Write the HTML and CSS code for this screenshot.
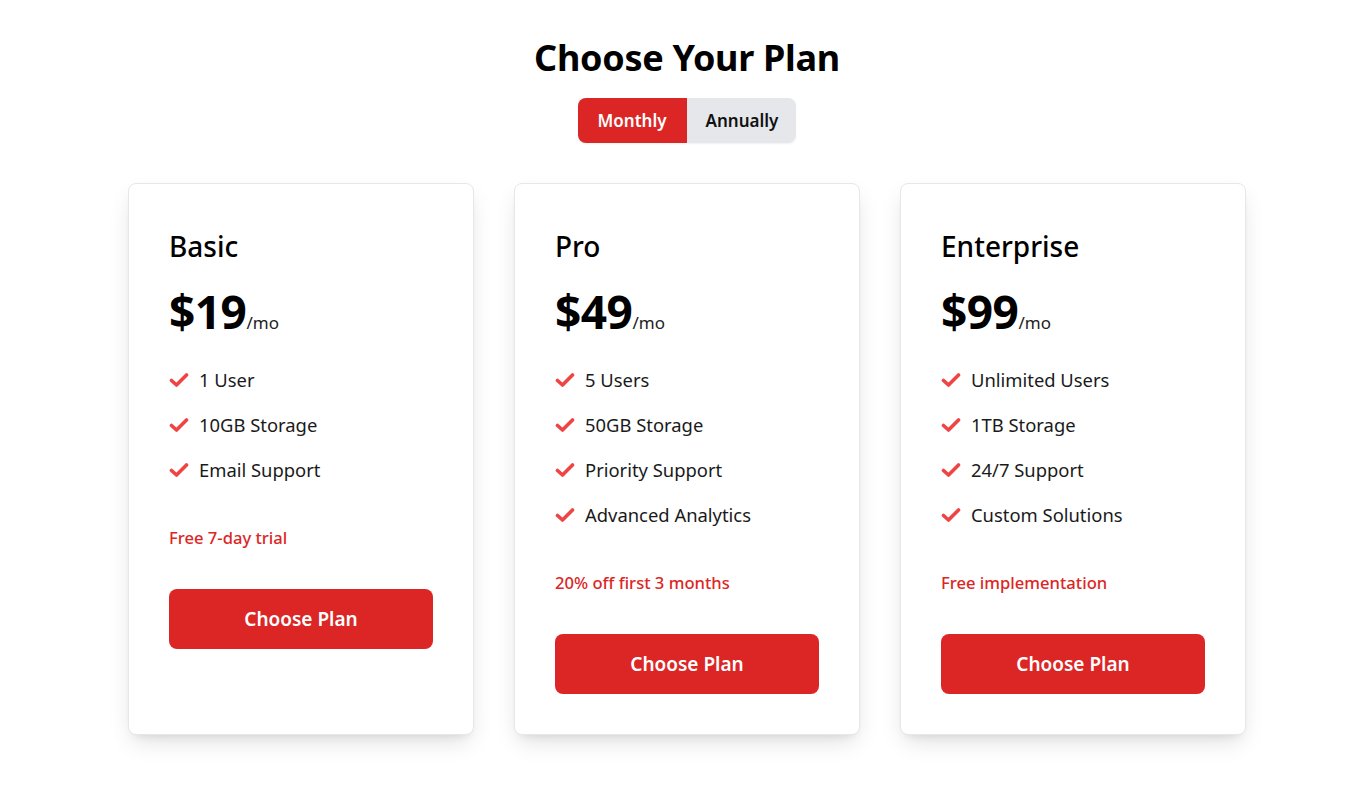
FILE: index.html
```html
<!DOCTYPE html>
<html lang="en">
<head>
<meta charset="utf-8">
<title>Choose Your Plan</title>
<link rel="stylesheet" href="styles.css">
</head>
<body>
<main class="page">
  <h1 class="title">Choose Your Plan</h1>
  <div class="toggle">
    <button class="toggle-btn active">Monthly</button>
    <button class="toggle-btn">Annually</button>
  </div>
  <section class="plans">
    <article class="card">
      <h2 class="plan-name">Basic</h2>
      <p class="price"><span class="amount">$19</span><span class="per">/mo</span></p>
      <ul class="features">
        <li><svg class="check" viewBox="0 0 20 16"><polyline points="2.5,8.5 7.5,13 17.5,3"/></svg>1 User</li>
        <li><svg class="check" viewBox="0 0 20 16"><polyline points="2.5,8.5 7.5,13 17.5,3"/></svg>10GB Storage</li>
        <li><svg class="check" viewBox="0 0 20 16"><polyline points="2.5,8.5 7.5,13 17.5,3"/></svg>Email Support</li>
      </ul>
      <p class="note">Free 7-day trial</p>
      <button class="choose">Choose Plan</button>
    </article>
    <article class="card">
      <h2 class="plan-name">Pro</h2>
      <p class="price"><span class="amount">$49</span><span class="per">/mo</span></p>
      <ul class="features">
        <li><svg class="check" viewBox="0 0 20 16"><polyline points="2.5,8.5 7.5,13 17.5,3"/></svg>5 Users</li>
        <li><svg class="check" viewBox="0 0 20 16"><polyline points="2.5,8.5 7.5,13 17.5,3"/></svg>50GB Storage</li>
        <li><svg class="check" viewBox="0 0 20 16"><polyline points="2.5,8.5 7.5,13 17.5,3"/></svg>Priority Support</li>
        <li><svg class="check" viewBox="0 0 20 16"><polyline points="2.5,8.5 7.5,13 17.5,3"/></svg>Advanced Analytics</li>
      </ul>
      <p class="note">20% off first 3 months</p>
      <button class="choose">Choose Plan</button>
    </article>
    <article class="card">
      <h2 class="plan-name">Enterprise</h2>
      <p class="price"><span class="amount">$99</span><span class="per">/mo</span></p>
      <ul class="features">
        <li><svg class="check" viewBox="0 0 20 16"><polyline points="2.5,8.5 7.5,13 17.5,3"/></svg>Unlimited Users</li>
        <li><svg class="check" viewBox="0 0 20 16"><polyline points="2.5,8.5 7.5,13 17.5,3"/></svg>1TB Storage</li>
        <li><svg class="check" viewBox="0 0 20 16"><polyline points="2.5,8.5 7.5,13 17.5,3"/></svg>24/7 Support</li>
        <li><svg class="check" viewBox="0 0 20 16"><polyline points="2.5,8.5 7.5,13 17.5,3"/></svg>Custom Solutions</li>
      </ul>
      <p class="note">Free implementation</p>
      <button class="choose">Choose Plan</button>
    </article>
  </section>
</main>
</body>
</html>
```
FILE: styles.css
```css
* { box-sizing: border-box; }
html, body { margin: 0; padding: 0; background: #ffffff; }
body {
  font-family: "Noto Sans", "Open Sans", Arial, sans-serif;
  color: #111111;
}
.page {
  padding: 36px 0 60px 12px;
  display: flex;
  flex-direction: column;
  align-items: center;
}
.title {
  margin: 0;
  font-size: 36px;
  line-height: 44px;
  font-weight: 700;
  color: #000;
  letter-spacing: -0.3px;
}
.toggle {
  margin-top: 18px;
  display: flex;
  border-radius: 8px;
  overflow: hidden;
  background: #e5e7eb;
  box-shadow: 0 1px 2px rgba(0,0,0,0.06);
}
.toggle-btn {
  border: 0;
  background: transparent;
  font-family: inherit;
  font-size: 17px;
  font-weight: 600;
  color: #111;
  height: 45px;
  padding: 0 18px 0 19px;
  cursor: pointer;
}
.toggle-btn.active {
  background: #dc2626;
  color: #fff;
  padding: 0 20px;
}
.plans {
  margin-top: 40px;
  display: grid;
  grid-template-columns: repeat(3, 346px);
  gap: 40px;
}
.card {
  background: #fff;
  border: 1px solid #e5e7eb;
  border-radius: 8px;
  box-shadow: 0 10px 25px -5px rgba(0,0,0,0.14), 0 6px 10px -6px rgba(0,0,0,0.1);
  padding: 40px;
}
.plan-name {
  margin: 0;
  font-size: 28px;
  line-height: 44px;
  font-weight: 500;
  color: #000;
}
.price {
  margin: 15px 0 0;
  line-height: 56px;
  color: #000;
}
.amount {
  font-size: 46px;
  font-weight: 700;
  letter-spacing: -0.5px;
}
.per {
  font-size: 17px;
  color: #222;
}
.features {
  list-style: none;
  margin: 14px 0 0;
  padding: 0;
  display: flex;
  flex-direction: column;
  gap: 16px;
}
.features li {
  display: flex;
  align-items: center;
  gap: 10px;
  font-size: 18.4px;
  line-height: 29px;
  color: #1a1a1a;
}
.check {
  width: 20px;
  height: 16px;
  flex: none;
  fill: none;
  stroke: #ef4444;
  stroke-width: 3.6;
  stroke-linecap: round;
  stroke-linejoin: round;
}
.note {
  margin: 42px 0 0;
  font-size: 16.6px;
  line-height: 24px;
  font-weight: 500;
  color: #dc2626;
}
.choose {
  display: block;
  width: 100%;
  margin-top: 39px;
  height: 60px;
  border: 0;
  border-radius: 8px;
  background: #dc2626;
  color: #fff;
  font-family: inherit;
  font-size: 19px;
  font-weight: 600;
  cursor: pointer;
}
```
